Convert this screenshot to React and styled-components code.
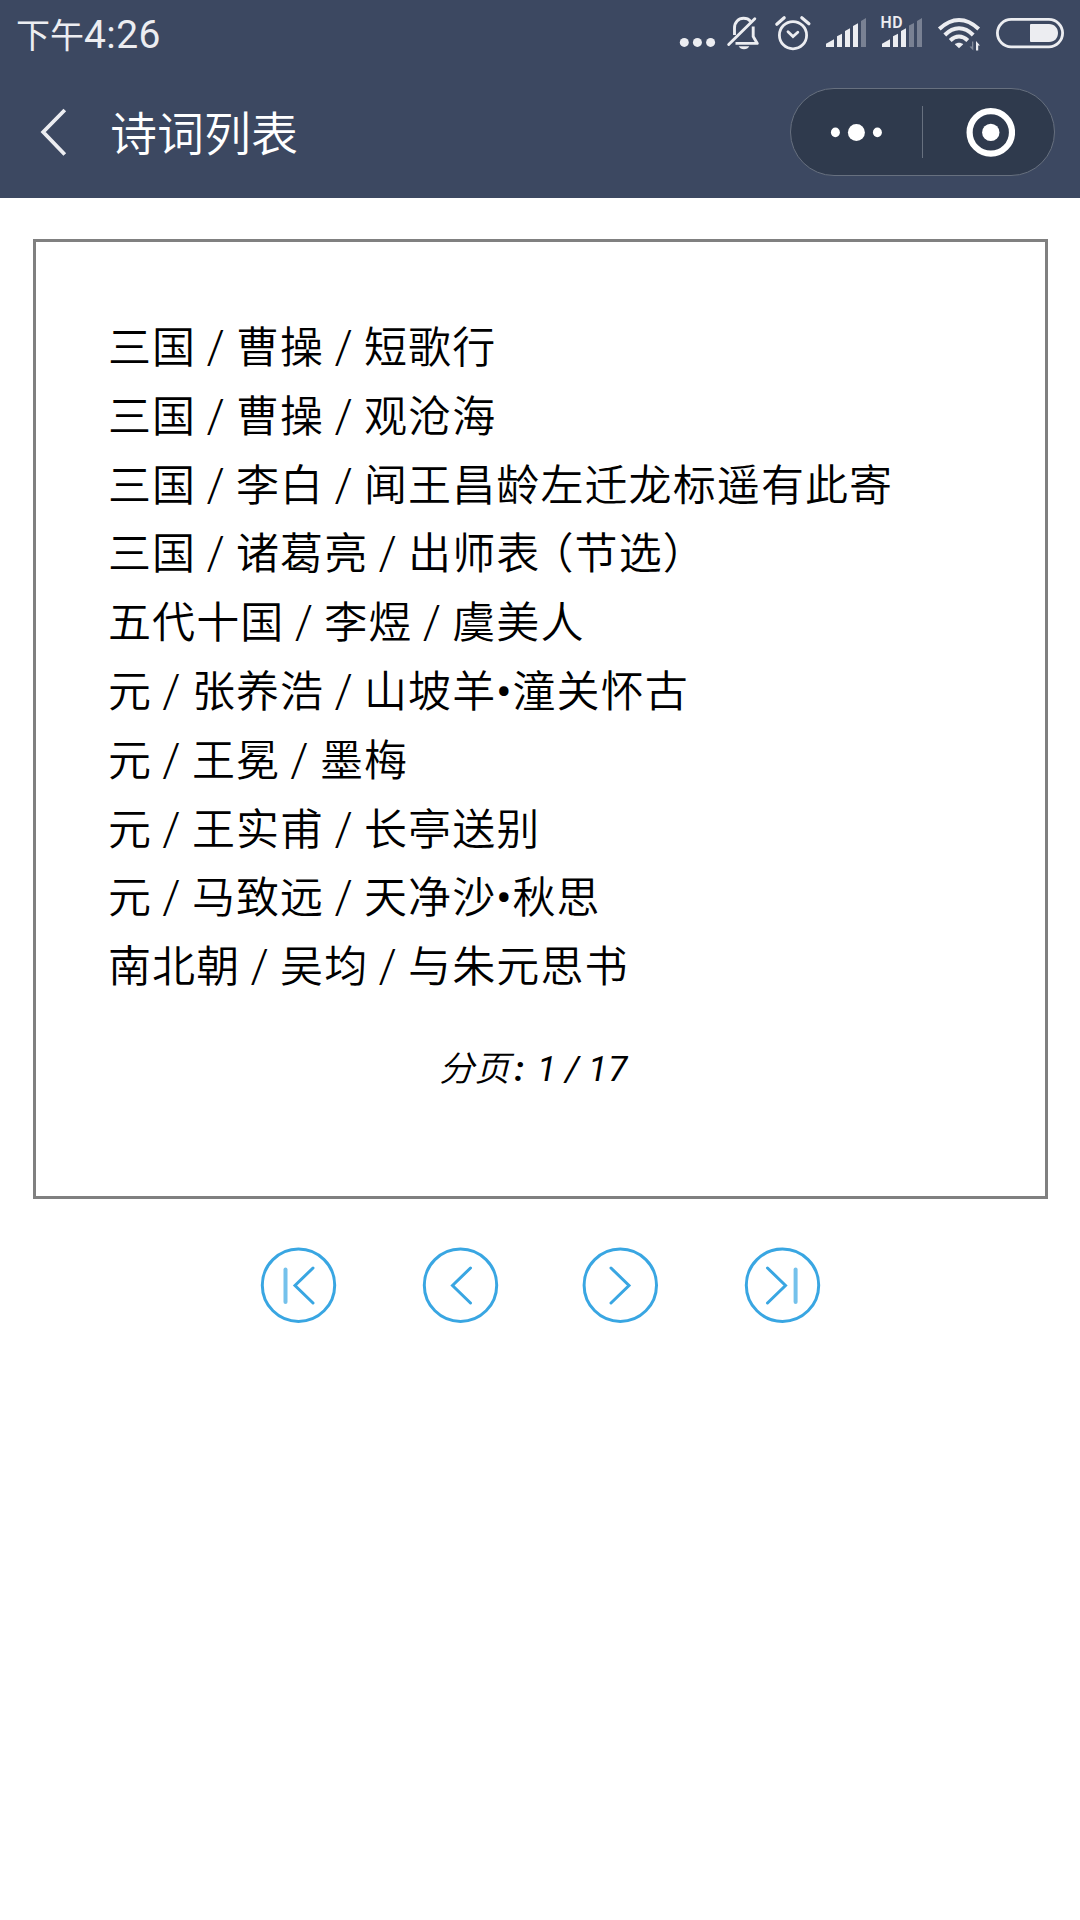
import React, {useState} from 'react'
import styled, {createGlobalStyle} from 'styled-components'

const GlobalStyle = createGlobalStyle`
    * {
        box-sizing:border-box;
    }

    body {
        margin:0;
        background:#fff;
        font-family:Roboto, "Noto Sans CJK SC", sans-serif;
    }
`;

const Page = styled.div`
    width:1080px;
    min-height:1920px;
    background:#fff;
`;

const Header = styled.header`
    height:198px;
    background:#3c4861;
    color:#fff;
`;

const StatusBar = styled.div`
    height:66px;
    display:flex;
    justify-content:space-between;
    align-items:flex-start;
    padding:0 16px;
    color:#ecedf1;
`;

const Clock = styled.div`
    font-size:34px;
    line-height:72px;
    font-weight:400;
    white-space:nowrap;
`;

const Digits = styled.span`
    font-size:39px;
    line-height:1;
    letter-spacing:0.4px;
`;

const StatusIcons = styled.div`
    display:flex;
    align-items:flex-start;

    svg {
        display:block;
    }
`;

const NavBar = styled.nav`
    height:132px;
    display:flex;
    align-items:center;
    padding:0 25px 0 40px;
`;

const BackIcon = styled.svg`
    display:block;
    width:28px;
    height:50px;
`;

const Title = styled.h1`
    flex:1;
    margin:0 0 2px 42px;
    font-family:"Noto Sans CJK SC", sans-serif;
    font-size:47px;
    line-height:66px;
    font-weight:350;
`;

const Capsule = styled.div`
    width:265px;
    height:88px;
    display:flex;
    align-items:center;
    border:1px solid #67707f;
    border-radius:44px;
    background:#2f3a4d;
`;

const CapsuleButton = styled.button`
    flex:1;
    height:100%;
    display:flex;
    justify-content:center;
    align-items:center;
    padding:0;
    border:none;
    background:none;
    cursor:pointer;
`;

const CapsuleDivider = styled.span`
    width:1px;
    height:52px;
    background:#67707f;
`;

const Card = styled.section`
    height:960px;
    margin:41px 32px 0 33px;
    padding:72px 72px 0;
    border:3px solid #808080;
`;

const PoemList = styled.ul`
    margin:0;
    padding:0;
    list-style:none;
`;

const PoemItem = styled.li`
    height:68.8px;
    font-size:43px;
    line-height:68.8px;
    letter-spacing:1.1px;
    font-weight:350;
    color:#000;
    white-space:nowrap;
`;

const Slash = styled.span`
    display:inline-block;
    width:39.8px;
    padding-right:1px;
    text-align:center;
    font-size:46px;
    line-height:1;
    letter-spacing:0;
    font-weight:350;
`;

const Dot = styled.span`
    font-weight:500;
`;

// half-width form of the wide bracket, with its own gap
const Bracket = styled.span`
    padding-left:11.5px;
    font-feature-settings:"halt";
`;

const PageInfo = styled.p`
    margin:42px 14px 0 0;
    text-align:center;
    font-size:35px;
    line-height:52px;
    letter-spacing:0.8px;
    font-weight:350;
    font-style:italic;
    color:#000;
`;

const PageCount = styled.span`
    font-weight:400;
    word-spacing:-1.2px;
`;

const Colon = styled.span`
    margin:0 4px 0 4px;
    font-weight:700;
`;

const Pager = styled.div`
    display:flex;
    justify-content:center;
    gap:82px;
    margin-top:47px;
`;

const PagerGroup = styled.div`
    display:flex;
    gap:84px;
`;

const PagerButton = styled.button`
    width:78px;
    height:78px;
    padding:0;
    border:none;
    background:none;
    cursor:pointer;

    svg {
        display:block;
        fill:none;
        stroke:#39a6e2;
        stroke-width:3;
        stroke-linecap:round;
    }
`;

const poems = [
    ['三国', '曹操', '短歌行'],
    ['三国', '曹操', '观沧海'],
    ['三国', '李白', '闻王昌龄左迁龙标遥有此寄'],
    ['三国', '诸葛亮', '出师表（节选）'],
    ['五代十国', '李煜', '虞美人'],
    ['元', '张养浩', '山坡羊•潼关怀古'],
    ['元', '王冕', '墨梅'],
    ['元', '王实甫', '长亭送别'],
    ['元', '马致远', '天净沙•秋思'],
    ['南北朝', '吴均', '与朱元思书'],
]

const TOTAL = 17

// status icons share one strip, every viewBox is a slice of it
const StatusIconRow = () => (
    <StatusIcons>
        <svg width="46" height="60" viewBox="679 0 46 60" fill="#ecedf1">
            <circle cx="684.3" cy="42.4" r="4.5" />
            <circle cx="697.4" cy="42.4" r="4.5" />
            <circle cx="710.6" cy="42.4" r="4.5" />
        </svg>
        <svg width="48" height="60" viewBox="725 0 48 60" fill="none" stroke="#ecedf1" strokeWidth="2.9">
            <path d="M734.5 35V28C734.5 22 738.5 18.3 743.5 18.3C746.5 18.3 749 19.4 750.5 21.2" />
            <path d="M753.2 26.5V36.5L757.3 43.4H735.5" strokeLinejoin="round" />
            <path d="M728.7 44.5L754.8 18.7" strokeLinecap="round" />
            <path d="M738.7 46.2H749.3C748.3 48.2 746.5 49.2 744 49.2C741.5 49.2 739.7 48.2 738.7 46.2Z" fill="#ecedf1" stroke="none" />
        </svg>
        <svg width="50" height="60" viewBox="773 0 50 60" fill="none" stroke="#ecedf1" strokeWidth="2.8" strokeLinecap="round">
            <circle cx="793" cy="35.2" r="13.6" />
            <path d="M788 31.8L793 36.6L797.8 32.3" />
            <path d="M776.8 24.2L784.2 17.8M801.8 17.8L808.9 23.7" strokeWidth="3.2" />
        </svg>
        <svg width="56" height="60" viewBox="823 0 56 60" fill="#ecedf1">
            <path d="M826 47V43.8L834 39.3V47ZM837 47V36.3L842 33.7V47ZM845 47V31L850 28.3V47ZM853 47V26L858 23.2V47Z" />
            <path d="M861 47V21L866 18V47Z" opacity="0.35" />
        </svg>
        <svg width="57" height="60" viewBox="879 0 57 60" fill="#ecedf1">
            <text x="880.4" y="28" fontFamily="Roboto, sans-serif" fontSize="15.8" fontWeight="600" letterSpacing="0.6">HD</text>
            <path d="M882 47V43.8L890 39.3V47ZM893 47V36.3L898 33.7V47ZM901 47V31L906 28.3V47Z" />
            <path d="M909 47V25.5L914 23V47ZM917 47V21L922 18V47Z" opacity="0.35" />
        </svg>
        <svg width="58" height="60" viewBox="936 0 58 60" fill="none" stroke="#ecedf1" strokeWidth="4">
            <path d="M939.3 29C946.5 22.2 952.5 20 959 20C965.5 20 971.5 22.2 978.7 29" />
            <path d="M944.8 35C949.8 30 954 28.3 959 28.3C964 28.3 968.2 30 973.2 35" />
            <path d="M950.2 40.5C953.2 37.6 955.8 36.5 959 36.5C962.2 36.5 964.8 37.6 967.8 40.5" />
            <path d="M954.8 44.2C957.2 42.2 960.8 42.2 963.2 44.2L959 48.2Z" fill="#ecedf1" stroke="none" />
            <path d="M973.3 41.5V50.5L969.5 46.5H972V41.5Z" fill="#ecedf1" stroke="none" opacity="0.4" />
            <path d="M976 50.5V41L980 45.5H978.2V50.5Z" fill="#ecedf1" stroke="none" />
        </svg>
        <svg width="70" height="60" viewBox="994 0 70 60">
            <rect x="997.4" y="19.4" width="65.2" height="27.4" rx="13.7" fill="none" stroke="#ecedf1" strokeWidth="2.8" />
            <path d="M1031 24H1049C1054.5 24 1058 28 1058 33C1058 38 1054.5 42 1049 42H1031Q1030 42 1030 41V25Q1030 24 1031 24Z" fill="#ecedf1" />
        </svg>
    </StatusIcons>
)

const PoemTitle = ({text}) => {
    const [before, inner] = text.split(/[（）]/)
    if (inner !== undefined) {
        return <>{before}<Bracket>（</Bracket>{inner}）</>
    }

    const [name, part] = text.split('•')
    if (part !== undefined) {
        return <>{name}<Dot>•</Dot>{part}</>
    }
    return text
}

const App = () => {
    const [page, setPage] = useState(1)

    const goTo = (next) => {
        setPage(Math.min(TOTAL, Math.max(1, next)))
    }

    return (
<>
<GlobalStyle />
<Page>
    <Header>
        <StatusBar>
            <Clock>下午<Digits>4:26</Digits></Clock>
            <StatusIconRow />
        </StatusBar>
        <NavBar>
            <BackIcon viewBox="0 0 28 50" fill="none" stroke="#ecedf1" strokeWidth="3.8">
                <path d="M24.8 3L3.2 25L24.8 47.5" />
            </BackIcon>
            <Title>诗词列表</Title>
            <Capsule>
                <CapsuleButton>
                    <svg width="54" height="20" viewBox="0 0 54 20" fill="#fff">
                        <ellipse cx="5.4" cy="10.4" rx="4.5" ry="4.8" />
                        <circle cx="26.4" cy="10.4" r="8.5" />
                        <ellipse cx="47.4" cy="10.4" rx="4.5" ry="4.8" />
                    </svg>
                </CapsuleButton>
                <CapsuleDivider />
                <CapsuleButton>
                    <svg width="52" height="52" viewBox="0 0 52 52">
                        <circle cx="27.8" cy="26.4" r="21.2" fill="none" stroke="#fff" strokeWidth="6.2" />
                        <circle cx="27.8" cy="26.4" r="8.7" fill="#fff" />
                    </svg>
                </CapsuleButton>
            </Capsule>
        </NavBar>
    </Header>
    <Card>
        <PoemList>
            {poems.map(([dynasty, author, title]) => (
                <PoemItem key={title}>
                    {dynasty}<Slash>/</Slash>{author}<Slash>/</Slash><PoemTitle text={title} />
                </PoemItem>
            ))}
        </PoemList>
        <PageInfo>分页<Colon>:</Colon><PageCount> {page} / {TOTAL}</PageCount></PageInfo>
    </Card>
    <Pager>
        <PagerGroup>
            <PagerButton onClick={() => goTo(1)}>
                <svg width="78" height="78" viewBox="0 0 78 78">
                    <circle cx="39.5" cy="39.2" r="36.2" />
                    <path d="M54 22L36 39.5L54 57" />
                    <path d="M26.5 23.5V56" strokeWidth="4" strokeOpacity="0.7" />
                </svg>
            </PagerButton>
            <PagerButton onClick={() => goTo(page - 1)}>
                <svg width="78" height="78" viewBox="0 0 78 78">
                    <circle cx="39.5" cy="39.2" r="36.2" />
                    <path d="M49.5 22L31.5 39.5L49.5 57" />
                </svg>
            </PagerButton>
        </PagerGroup>
        <PagerGroup>
            <PagerButton onClick={() => goTo(page + 1)}>
                <svg width="78" height="78" viewBox="0 0 78 78">
                    <circle cx="39.3" cy="39.2" r="36.2" />
                    <path d="M30 22L48 39.5L30 57" />
                </svg>
            </PagerButton>
            <PagerButton onClick={() => goTo(TOTAL)}>
                <svg width="78" height="78" viewBox="0 0 78 78">
                    <circle cx="39.5" cy="39.2" r="36.2" />
                    <path d="M24.5 22L42.5 39.5L24.5 57" />
                    <path d="M52.6 23.5V56" strokeWidth="4" strokeOpacity="0.7" />
                </svg>
            </PagerButton>
        </PagerGroup>
    </Pager>
</Page>
</>
    )
}

export default App
